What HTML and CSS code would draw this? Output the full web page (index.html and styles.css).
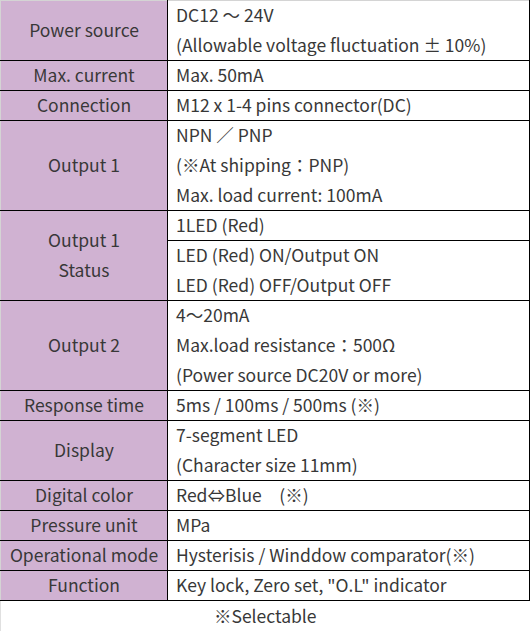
FILE: index.html
```html
<!DOCTYPE html>
<html>
<head>
<meta charset="utf-8">
<link rel="stylesheet" href="styles.css">
</head>
<body>
<table class="spec">
  <tr><th><div class="c">Power source</div></th><td><div class="c">DC12 ～ 24V<br>(Allowable voltage fluctuation ± 10%)</div></td></tr>
  <tr><th><div class="c">Max. current</div></th><td><div class="c">Max. 50mA</div></td></tr>
  <tr><th><div class="c">Connection</div></th><td><div class="c">M12 x 1-4 pins connector(DC)</div></td></tr>
  <tr><th><div class="c">Output 1</div></th><td><div class="c">NPN ／ PNP<br>(※At shipping：PNP)<br>Max. load current: 100mA</div></td></tr>
  <tr><th rowspan="2"><div class="c">Output 1<br>Status</div></th><td><div class="c">1LED (Red)</div></td></tr>
  <tr><td><div class="c">LED (Red) ON/Output ON<br>LED (Red) OFF/Output OFF</div></td></tr>
  <tr><th><div class="c">Output 2</div></th><td><div class="c">4～20mA<br>Max.load resistance：500Ω<br>(Power source DC20V or more)</div></td></tr>
  <tr><th><div class="c">Response time</div></th><td><div class="c">5ms / 100ms / 500ms (※)</div></td></tr>
  <tr><th><div class="c">Display</div></th><td><div class="c">7-segment LED<br>(Character size 11mm)</div></td></tr>
  <tr><th><div class="c">Digital color</div></th><td><div class="c">Red⇔Blue　(※)</div></td></tr>
  <tr><th><div class="c">Pressure unit</div></th><td><div class="c">MPa</div></td></tr>
  <tr><th><div class="c">Operational mode</div></th><td><div class="c">Hysterisis / Winddow comparator(※)</div></td></tr>
  <tr><th><div class="c">Function</div></th><td><div class="c">Key lock, Zero set, "O.L" indicator</div></td></tr>
  <tr class="foot"><td colspan="2">※Selectable</td></tr>
</table>
</body>
</html>
```

FILE: styles.css
```css
html, body {
  margin: 0;
  padding: 0;
  background: #fff;
}
body {
  font-family: "Noto Sans CJK JP", "Noto Sans", sans-serif;
  font-size: 17.5px;
  color: #383838;
}
.spec {
  width: 530px;
  border-collapse: collapse;
  table-layout: fixed;
}
.spec th,
.spec td {
  border: 1px solid #000;
  padding: 0;
  vertical-align: middle;
}
.spec .c {
  line-height: 30px;
  margin-top: -1px;
  white-space: nowrap;
}
.spec th {
  width: 166px;
  background: #d0b2d2;
  font-weight: normal;
  text-align: center;
}
.spec td {
  padding-left: 8px;
  text-align: left;
}
.spec tr:first-child th,
.spec tr:first-child td {
  border-top-color: #d4d4d4;
}
.spec th {
  border-left-color: #d4d4d4;
}
.spec .foot td {
  border: none;
  border-left: 1px solid #e0e0e0;
  text-align: center;
  padding: 0;
  line-height: 30px;
}
```
